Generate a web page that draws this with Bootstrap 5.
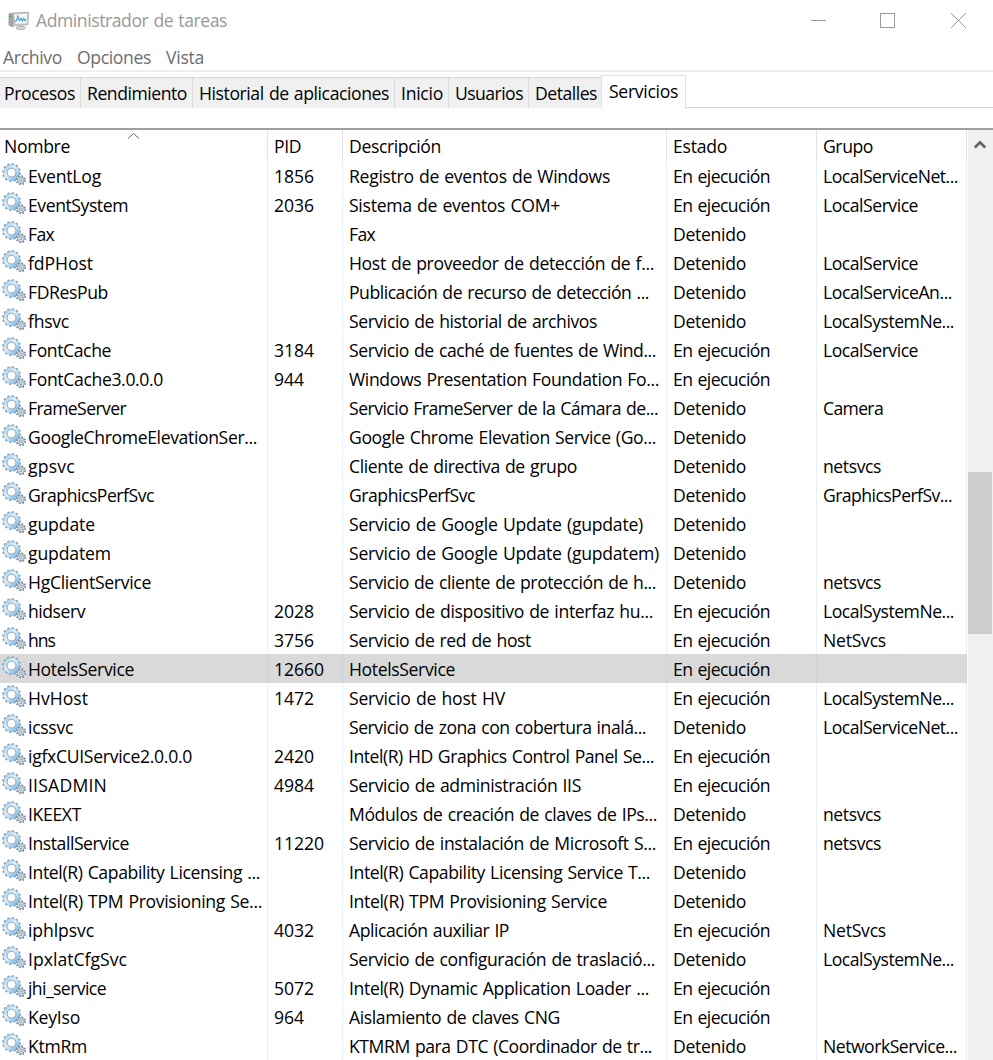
<!DOCTYPE html>
<html lang="es">
<head>
<meta charset="utf-8">
<meta name="viewport" content="width=device-width, initial-scale=1">
<title>Administrador de tareas</title>
<link rel="stylesheet" href="https://cdn.jsdelivr.net/npm/bootstrap@5.3.0/dist/css/bootstrap.min.css">
<style>
html, body { height: 1060px; }
body { font-family: "Open Sans", "Noto Sans", sans-serif; font-size: 17.6px; word-spacing: 1px; line-height: 29px; color: #000; overflow: hidden; }
.titlebar { height: 41px; color: #999; padding-left: 8px; }
.titlebar .appicon { margin-top: 1px; margin-right: 7px; }
.menubar { height: 31px; border-bottom: 2px solid #f0f0f0; color: #6d6d6d; padding-left: 3px; }
.menubar a { color: inherit; text-decoration: none; height: 29px; line-height: 33px; }
.menubar a + a { margin-left: 15px; }
.tabstrip { height: 36px; padding-top: 5px; border-bottom: 1px solid #d9d9d9; }
.tabstrip .nav-link { height: 31px; padding: 0 0 0 6px; border: solid #d9d9d9; border-width: 1px 1px 0 0; border-radius: 0; background: #f0f0f0; color: #000; line-height: 31px; }
.tabstrip .nav-link:first-child { padding-left: 4px; }
.tabstrip .nav-link.active { height: 34px; margin-top: -2px; margin-left: -1px; border-left-width: 1px; background: #fff; padding-left: 7px; }
.pane-gap { height: 20px; }
.listwrap { height: 932px; border-top: 2px solid #a0a0a0; }
.svcgrid { width: 967px; }
.line { display: grid; grid-template-columns: 268px 75px 324px 150px 150px; height: 29px; }
.line > div { border-right: 1px solid #e5f1fb; padding-left: 6px; overflow: hidden; line-height: 31px; }
.line > div:first-child { padding-left: 2px; display: flex; }
.line.heads { height: 31px; }
.line.heads > div { border-color: #e3e3e3; line-height: 33px; }
.line.heads > div:first-child { padding-left: 4px; position: relative; }
.line.chosen { background: #d9d9d9; }
.line.chosen > div { border-color: #c9d6e2; }
.gear { width: 24px; height: 24px; margin: 1px 2px 0 0; flex: none; }
.sortmark { position: absolute; left: 127px; top: 2px; }
.scrollrail { width: 25px; margin-left: 1px; background: #f0f0f0; }
.scrollrail svg { display: block; margin: 10px 0 0 6px; }
.thumb { width: 24px; height: 162px; margin-top: 323px; background: #cdcdcd; }
</style>
</head>
<body class="bg-white">
<svg width="0" height="0" class="position-absolute">
  <defs>
    <linearGradient id="steel" x1="0" y1="0" x2="1" y2="1"><stop offset="0" stop-color="#a9cde6"/><stop offset=".4" stop-color="#dff0fb"/><stop offset=".65" stop-color="#b8dcf6"/><stop offset="1" stop-color="#7fb0d8"/></linearGradient>
  </defs>
  <symbol id="gears" viewBox="0 0 24 24">
    <circle cx="9.5" cy="10.6" r="8.4" fill="none" stroke="#7f9fb8" stroke-width="2" stroke-dasharray="2.1 2.3"/>
    <circle cx="9.5" cy="10.6" r="6.2" fill="none" stroke="#8fb0c9" stroke-width="4.2"/>
    <circle cx="9.5" cy="10.6" r="6.3" fill="none" stroke="url(#steel)" stroke-width="3.2"/>
    <circle cx="9.5" cy="10.6" r="4.4" fill="#fff" stroke="#7d98ad" stroke-width=".8"/>
    <circle cx="18.9" cy="18.2" r="4.3" fill="#fff" stroke="#73879a" stroke-width="1.6" stroke-dasharray="1.7 1.68"/>
    <circle cx="18.9" cy="18.2" r="3.4" fill="#e6f0f8" stroke="#8199ac" stroke-width="1"/>
    <circle cx="18.9" cy="18.2" r="1.4" fill="#fff" stroke="#6d8599" stroke-width=".9"/>
  </symbol>
</svg>

<header class="titlebar d-flex align-items-center">
  <svg class="appicon" width="21" height="20" viewBox="0 0 21 20">
    <path d="M1 3l4-1v14l-4-2z" fill="#a9a9a9" stroke="#858585" stroke-width=".7"/>
    <path d="M1.5 5.5h2" stroke="#3fae49" stroke-width="1.5"/>
    <path d="M4.8 2l15.7-.5-.8 12.2-13.4.7z" fill="#d8d8d8" stroke="#a8a8a8"/>
    <path d="M6.5 3.6l12.3-.3-.6 8.8-10.6.5z" fill="#f5faff"/>
    <path d="M7 10.5l1.6-1.2 1.2-4.2 1.5 4.6 1.8-2.3 1.2 2.6 1.5-2.7 1 2.3 1.2-.8" fill="none" stroke="#459bcd" stroke-width="1.1"/>
    <path d="M11 14.3h4v2h-4z" fill="#bbb"/><ellipse cx="12.7" cy="16.9" rx="4.8" ry="1.8" fill="#d1d1d1" stroke="#aaa" stroke-width=".6"/>
  </svg>
  <span data-w="191">Administrador de tareas</span>
  <svg class="ms-auto" width="183" height="20" viewBox="810 10 183 20" fill="none" stroke="#999" shape-rendering="crispEdges">
    <path d="M811 19.5h15M880.5 12.5h14v14h-14z"/>
    <path d="M951 12l15 15M966 12l-15 15" shape-rendering="auto"/>
  </svg>
</header>

<nav class="menubar d-flex">
  <a href="#"><span data-w="59">Archivo</span></a>
  <a href="#"><span data-w="74">Opciones</span></a>
  <a href="#"><span data-w="38">Vista</span></a>
</nav>

<div class="tabstrip nav nav-tabs flex-nowrap" id="tabs"></div>
<div class="pane-gap"></div>

<main class="listwrap d-flex">
  <div class="svcgrid" id="grid">
    <div class="line heads">
      <div><span data-w="66">Nombre</span>
        <svg class="sortmark" width="13" height="8" viewBox="0 0 13 8" fill="none" stroke="#666"><path d="M1 6.5l5.5-5 5.5 5"/></svg>
      </div>
      <div><span data-w="27">PID</span></div>
      <div><span data-w="92">Descripción</span></div>
      <div><span data-w="54">Estado</span></div>
      <div><span data-w="50">Grupo</span></div>
    </div>
  </div>
  <div class="scrollrail">
    <svg width="12" height="9" viewBox="0 0 12 9" fill="none" stroke="#606060" stroke-width="2.6"><path d="M.8 7.6L6 2.4l5.2 5.2"/></svg>
    <div class="thumb"></div>
  </div>
</main>

<script src="https://cdn.jsdelivr.net/npm/bootstrap@5.3.0/dist/js/bootstrap.bundle.min.js"></script>
<script>
// [label, text width, tab width]
const tabs = [["Procesos",71,81],["Rendimiento",100,112],["Historial de aplicaciones",190,202],["Inicio",42,54],["Usuarios",68,80],["Detalles",62,73],["Servicios",69,85]];
document.getElementById("tabs").innerHTML = tabs.map(([t, w, full], i) =>
  `<a class="nav-link ${i === 6 ? "active" : ""}" href="#" style="width:${full}px"><span data-w="${w}">${t}</span></a>`).join("");

// name, width | pid | description, width | running | group, width
const services = [
 ["EventLog",73,"1856","Registro de eventos de Windows",261,1,"LocalServiceNet...",135],
 ["EventSystem",100,"2036","Sistema de eventos COM+",211,1,"LocalService",95],
 ["Fax",26,"","Fax",26,0,"",0],
 ["fdPHost",65,"","Host de proveedor de detección de f...",305,0,"LocalService",95],
 ["FDResPub",80,"","Publicación de recurso de detección ...",300,0,"LocalServiceAn...",129],
 ["fhsvc",41,"","Servicio de historial de archivos",248,0,"LocalSystemNe...",131],
 ["FontCache",83,"3184","Servicio de caché de fuentes de Wind...",307,1,"LocalService",95],
 ["FontCache3.0.0.0",135,"944","Windows Presentation Foundation Fo...",310,1,"",0],
 ["FrameServer",98,"","Servicio FrameServer de la Cámara de...",309,0,"Camera",60],
 ["GoogleChromeElevationSer...",229,"","Google Chrome Elevation Service (Go...",307,0,"",0],
 ["gpsvc",47,"","Cliente de directiva de grupo",228,0,"netsvcs",58],
 ["GraphicsPerfSvc",126,"","GraphicsPerfSvc",126,0,"GraphicsPerfSv...",129],
 ["gupdate",67,"","Servicio de Google Update (gupdate)",294,0,"",0],
 ["gupdatem",83,"","Servicio de Google Update (gupdatem)",310,0,"",0],
 ["HgClientService",123,"","Servicio de cliente de protección de h...",307,0,"netsvcs",58],
 ["hidserv",57,"2028","Servicio de dispositivo de interfaz hu...",304,1,"LocalSystemNe...",131],
 ["hns",27,"3756","Servicio de red de host",182,1,"NetSvcs",63],
 ["HotelsService",106,"12660","HotelsService",106,1,"",0],
 ["HvHost",60,"1472","Servicio de host HV",156,1,"LocalSystemNe...",131],
 ["icssvc",45,"","Servicio de zona con cobertura inalá...",297,0,"LocalServiceNet...",135],
 ["igfxCUIService2.0.0.0",164,"2420","Intel(R) HD Graphics Control Panel Se...",305,1,"",0],
 ["IISADMIN",79,"4984","Servicio de administración IIS",232,1,"",0],
 ["IKEEXT",53,"","Módulos de creación de claves de IPs...",308,0,"netsvcs",58],
 ["InstallService",101,"11220","Servicio de instalación de Microsoft S...",307,1,"netsvcs",58],
 ["Intel(R) Capability Licensing ...",232,"","Intel(R) Capability Licensing Service T...",301,0,"",0],
 ["Intel(R) TPM Provisioning Se...",234,"","Intel(R) TPM Provisioning Service",258,0,"",0],
 ["iphlpsvc",66,"4032","Aplicación auxiliar IP",160,1,"NetSvcs",63],
 ["IpxlatCfgSvc",99,"","Servicio de configuración de traslació...",306,0,"LocalSystemNe...",131],
 ["jhi_service",78,"5072","Intel(R) Dynamic Application Loader ...",300,1,"",0],
 ["KeyIso",52,"964","Aislamiento de claves CNG",211,1,"",0],
 ["KtmRm",59,"","KTMRM para DTC (Coordinador de tr...",303,0,"NetworkService...",134]
];
const label = (t, w) => `<span data-w="${w}">${t}</span>`;
document.getElementById("grid").insertAdjacentHTML("beforeend", services.map(s =>
 `<div class="line ${s[0] === "HotelsService" ? "chosen" : ""}">
   <div><svg class="gear"><use href="#gears"/></svg>${label(s[0], s[1])}</div>
   <div>${label(s[2], s[2].length * 10)}</div>
   <div>${label(s[3], s[4])}</div>
   <div>${s[5] ? label("En ejecución", 97) : label("Detenido", 73)}</div>
   <div>${label(s[6], s[7])}</div>
 </div>`).join(""));

document.querySelectorAll("[data-w]").forEach(el => {
  el.classList.add("text-nowrap");
  const n = el.textContent.length;
  if (n) el.style.letterSpacing = ((el.dataset.w - el.getBoundingClientRect().width) / n).toFixed(3) + "px";
});
</script>
</body>
</html>
